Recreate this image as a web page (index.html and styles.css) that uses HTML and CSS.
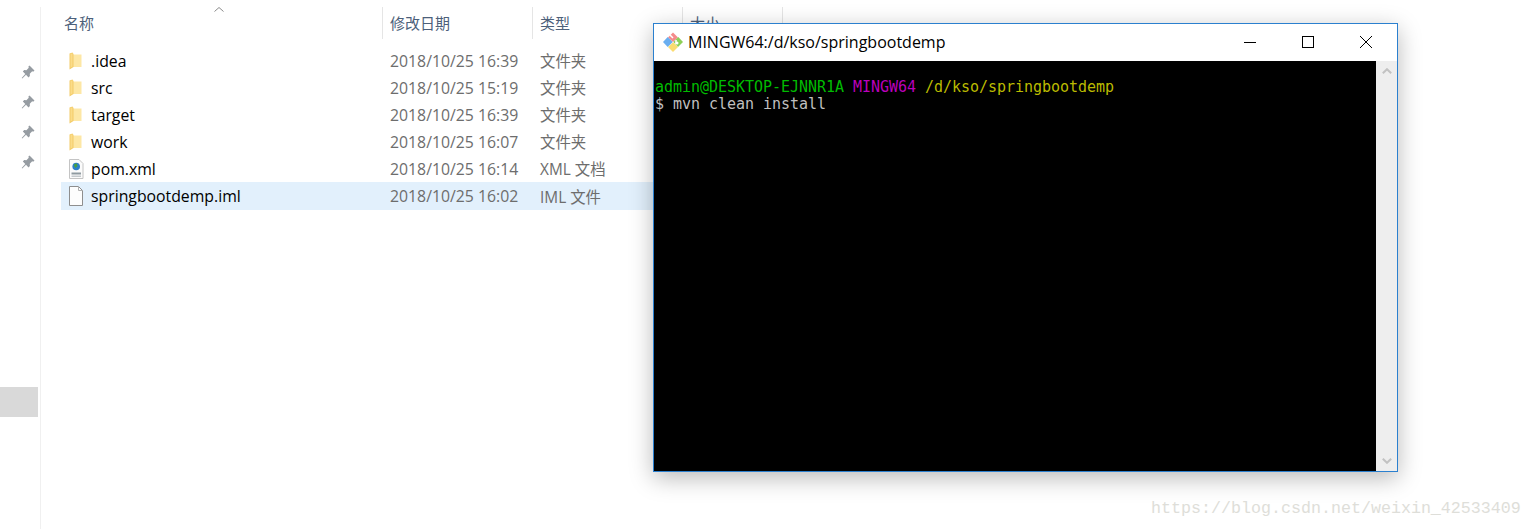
FILE: index.html
```html
<!DOCTYPE html>
<html lang="zh-CN">
<head>
<meta charset="utf-8">
<title>springbootdemp</title>
<link rel="stylesheet" href="styles.css">
</head>
<body>
<svg class="defs" width="0" height="0" aria-hidden="true">
  <defs>
    <symbol id="folder" viewBox="0 0 13 18">
      <path d="M4 2.500 H12.500 V15 H4 Z" fill="#fde7a5"/>
      <path d="M.5 1.500 L3.500 .5 L4.500 2 V15 L.5 17.500 Z" fill="#f3cb68"/>
      <path d="M1.500 2 L3.500 1.300 V14.500 L1.500 15.700 Z" fill="#fbdc88"/>
    </symbol>
    <symbol id="pin" viewBox="0 0 14 14">
      <path d="M8.500 .5 L13.500 5.500 L12.200 6.700 L11.200 6.200 L8.800 8.800 L8.900 11 L7.500 12.400 L5 9.700 L1.300 13.500 L.7 12.900 L4.300 9 L1.800 6.500 L3.200 5.100 L5.400 5.200 L7.800 2.800 L7.300 1.800 Z" fill="#969ca2"/>
    </symbol>
  </defs>
</svg>
<div class="explorer">
  <aside class="nav">
    <div class="pins">
      <svg class="pin"><use href="#pin"/></svg>
      <svg class="pin"><use href="#pin"/></svg>
      <svg class="pin"><use href="#pin"/></svg>
      <svg class="pin"><use href="#pin"/></svg>
    </div>
    <div class="nav-selected"></div>
  </aside>
  <main class="files">
    <div class="head">
      <div class="col col-name">名称<svg class="sort" viewBox="0 0 10 5"><path d="M.5 4.500 L5 .5 L9.500 4.500" fill="none" stroke="#8a8a8a"/></svg></div>
      <div class="col col-date">修改日期</div>
      <div class="col col-type">类型</div>
      <div class="col col-size">大小</div>
    </div>
    <div class="rows">
      <div class="row">
        <div class="cell-name"><svg class="ico"><use href="#folder"/></svg><span>.idea</span></div>
        <div class="cell-date">2018/10/25 16:39</div><div class="cell-type">文件夹</div>
      </div>
      <div class="row">
        <div class="cell-name"><svg class="ico"><use href="#folder"/></svg><span>src</span></div>
        <div class="cell-date">2018/10/25 15:19</div><div class="cell-type">文件夹</div>
      </div>
      <div class="row">
        <div class="cell-name"><svg class="ico"><use href="#folder"/></svg><span>target</span></div>
        <div class="cell-date">2018/10/25 16:39</div><div class="cell-type">文件夹</div>
      </div>
      <div class="row">
        <div class="cell-name"><svg class="ico"><use href="#folder"/></svg><span>work</span></div>
        <div class="cell-date">2018/10/25 16:07</div><div class="cell-type">文件夹</div>
      </div>
      <div class="row">
        <div class="cell-name">
          <svg class="ico-file" viewBox="0 0 16 20">
            <path d="M1.500 .5 H11 L15 4.500 V19.500 H1.500 Z" fill="#fbfbfb" stroke="#c4c4c4"/>
            <path d="M3.500 13.500 H13 V15.500 H3.500 Z" fill="#8f9aa0"/>
            <path d="M3.500 16.500 H13 V18 H3.500 Z" fill="#c4c9cc"/>
            <circle cx="8.200" cy="7.500" r="3.800" fill="#2d7fc8"/>
            <path d="M6 5.500 L8.500 4.200 L9.500 7 L7.500 9 L6.500 7.500 Z" fill="#49a23c"/>
          </svg>
          <span>pom.xml</span>
        </div>
        <div class="cell-date">2018/10/25 16:14</div><div class="cell-type">XML 文档</div>
      </div>
      <div class="row row-selected">
        <div class="cell-name">
          <svg class="ico-file" viewBox="0 0 16 20">
            <path d="M1.500 .5 H10.500 L14.500 4.500 V19.500 H1.500 Z" fill="#fdfdfd" stroke="#8e8e8e"/>
            <path d="M10.500 .5 V4.500 H14.500" fill="none" stroke="#b0b0b0"/>
          </svg>
          <span>springbootdemp.iml</span>
        </div>
        <div class="cell-date">2018/10/25 16:02</div><div class="cell-type">IML 文件</div>
      </div>
    </div>
  </main>
</div>

<section class="term">
  <header class="term-title">
    <svg class="git" viewBox="0 0 20 20">
      <path d="M10 .5 L15 5.500 L10 10 L5 5.500 Z" fill="#f58b8b"/>
      <path d="M15.300 5 L20 10 L15 15 L10.300 10 Z" fill="#8ccf58"/>
      <path d="M10 10.300 L15 15 L10 20 L5 15 Z" fill="#fbdc70"/>
      <path d="M4.700 5 L9.700 10 L4.700 15 L0 10 Z" fill="#6aaef0"/>
      <path d="M7 3 L10 6 M13 8 V12" stroke="#fff" stroke-width="1.500" fill="none"/>
      <circle cx="14" cy="11" r="1.500" fill="#fff"/>
    </svg>
    <span class="term-name">MINGW64:/d/kso/springbootdemp</span>
    <div class="controls">
      <svg class="ctl" viewBox="0 0 12 12"><path d="M0 6.500 H12" stroke="#000" fill="none"/></svg>
      <svg class="ctl" viewBox="0 0 12 12"><rect x=".5" y=".5" width="11" height="11" stroke="#000" fill="none"/></svg>
      <svg class="ctl" viewBox="0 0 12 12"><path d="M0 0 L12 12 M12 0 L0 12" stroke="#000" fill="none"/></svg>
    </div>
  </header>
  <div class="term-body">
    <pre class="console"><span class="green">admin@DESKTOP-EJNNR1A</span> <span class="magenta">MINGW64</span> <span class="yellow">/d/kso/springbootdemp</span>
$ mvn clean install</pre>
    <div class="scroll">
      <svg class="arrow" viewBox="0 0 10 6"><path d="M.8 5.200 L5 1.200 L9.200 5.200" fill="none" stroke="#c2c2c2" stroke-width="2"/></svg>
      <svg class="arrow" viewBox="0 0 10 6"><path d="M.8 .8 L5 4.800 L9.200 .8" fill="none" stroke="#c2c2c2" stroke-width="2"/></svg>
    </div>
  </div>
</section>

<div class="watermark">https://blog.csdn.net/weixin_42533409</div>
</body>
</html>
```

FILE: styles.css
```css
* { box-sizing: border-box; }
html, body { margin: 0; height: 100%; background: #fff; overflow: hidden; }
body { font-family: "Open Sans", "Noto Sans CJK SC", sans-serif; position: relative; }
.defs { position: absolute; }

.explorer { display: flex; height: 529px; }
.nav { width: 41px; height: 522px; margin-top: 7px; border-right: 1px solid #f0f0f0; flex: none; }
.pins { display: flex; flex-direction: column; gap: 16px; padding: 58px 0 0 21px; }
.pin { width: 14px; height: 14px; display: block; }
.nav-selected { width: 38px; height: 30px; margin-top: 218px; background: #d9d9d9; }

.files { padding-left: 20px; flex: none; width: 742px; }
.head { display: flex; height: 32px; margin-top: 7px; color: #4c607a; font: 15px "Noto Sans CJK SC", sans-serif; }
.col { display: flex; align-items: center; border-right: 1px solid #e5e5e5; padding: 0 0 2px 7px; height: 32px; position: relative; }
.col-name { width: 322px; padding-left: 3px; }
.col-date { width: 150px; }
.col-type { width: 150px; }
.col-size { width: 100px; }
.sort { position: absolute; left: 153px; top: 0; width: 10px; height: 5px; }

.rows { padding-top: 8px; }
.row { display: flex; height: 27px; align-items: center; font-size: 15.8px; }
.row-selected { background: #e2f0fc; height: 28px; }
.cell-name { width: 322px; display: flex; align-items: center; color: #000; }
.cell-name span { margin-left: 9px; }
.ico { width: 13px; height: 18px; margin-left: 8px; flex: none; }
.ico-file { width: 16px; height: 20px; margin-left: 7px; flex: none; }
.ico-file + span { margin-left: 7px; }
.cell-date { width: 150px; padding-left: 7px; color: #6d6d6d; }
.cell-type { width: 150px; padding-left: 7px; color: #6d6d6d; font-size: 15.4px; }

.term {
  position: absolute; left: 653px; top: 23px; width: 745px; height: 449px;
  border: 1px solid #2b80cf; background: #fff;
  box-shadow: 0 6px 22px rgba(0, 0, 0, .28);
  display: flex; flex-direction: column;
}
.term-title { height: 37px; display: flex; align-items: center; padding: 0 0 2px 9px; flex: none; }
.git { width: 20px; height: 20px; flex: none; }
.term-name { margin-left: 5px; font-size: 16px; color: #000; }
.controls { margin-left: auto; display: flex; gap: 46px; padding-right: 25px; align-items: center; }
.ctl { width: 12px; height: 12px; display: block; }
.term-body { flex: 1; display: flex; background: #000; min-height: 0; }
.console {
  flex: 1; margin: 0; padding: 18px 0 0 1px; color: #bfbfbf;
  font: 15px/17px "DejaVu Sans Mono", monospace; letter-spacing: -.03px;
}
.green { color: #00bb00; }
.magenta { color: #bb00bb; }
.yellow { color: #bbbb00; }
.scroll { width: 21px; background: #eeeeee; display: flex; flex-direction: column; justify-content: space-between; align-items: center; padding: 7px 0; }
.arrow { width: 10px; height: 6px; display: block; }

.watermark {
  position: absolute; left: 1151px; top: 499px;
  font: 16.67px/20px "Liberation Mono", monospace; color: #deded9;
  white-space: nowrap;
}
```
